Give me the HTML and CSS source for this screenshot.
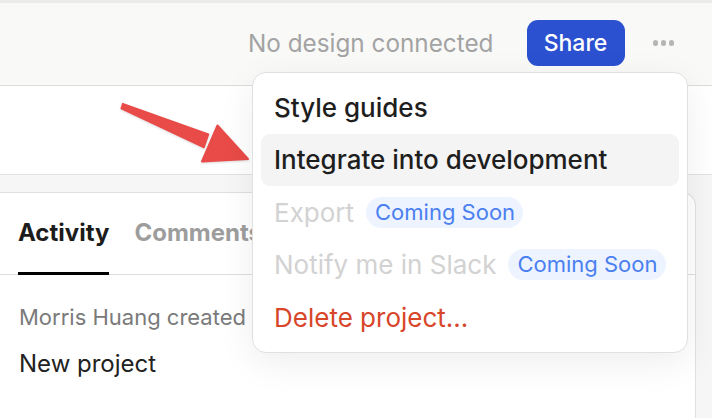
FILE: index.html
```html
<!DOCTYPE html>
<html>
<head>
<meta charset="utf-8">
<link rel="stylesheet" href="styles.css">
</head>
<body>
<div class="page">
  <div class="topline"></div>
  <header class="header">
    <span class="status">No design connected</span>
    <button class="share">Share</button>
    <span class="more"><i></i><i></i><i></i></span>
  </header>
  <section class="hero"></section>
  <div class="strip">
    <div class="card">
      <nav class="tabs">
        <span class="tab active">Activity</span>
        <span class="tab">Comments</span>
      </nav>
      <div class="feed">
        <div class="meta">Morris Huang created</div>
        <div class="title">New project</div>
      </div>
    </div>
  </div>

  <svg class="arrow" width="140" height="70" viewBox="115 100 140 70">
    <path d="M121.2 108.6 L122.8 103.6 L208.5 134.2 L204 147.5 Z" fill="#e84b48" stroke="#e84b48" stroke-width="1.5" stroke-linejoin="round"/>
    <path d="M217.5 125.5 L248 159 L202 161.5 Z" fill="#e84b48" stroke="#e84b48" stroke-width="2" stroke-linejoin="round"/>
  </svg>

  <div class="menu">
    <div class="item">Style guides</div>
    <div class="item hover">Integrate into development</div>
    <div class="item disabled">Export <span class="badge">Coming Soon</span></div>
    <div class="item disabled">Notify me in Slack <span class="badge">Coming Soon</span></div>
    <div class="item danger">Delete project...</div>
  </div>
</div>
</body>
</html>
```

FILE: styles.css
```css
html, body {
  margin: 0;
  padding: 0;
}
body {
  font-family: "Inter", "Noto Sans", sans-serif;
  background: #f6f6f6;
  overflow: hidden;
}
.page {
  position: relative;
  width: 712px;
  height: 418px;
  overflow: hidden;
}
.topline {
  height: 3px;
  background: #ebebeb;
}
.header {
  height: 83px;
  background: #f9f9f8;
  border-bottom: 1px solid #dcdcdc;
  box-sizing: border-box;
  display: flex;
  align-items: center;
  justify-content: flex-end;
  padding: 0 38px 2px 0;
}
.status {
  font-size: 24.3px;
  color: #a3a3a3;
  margin-right: 33px;
}
.share {
  font-family: inherit;
  border: 0;
  background: #2b50d0;
  color: #fff;
  font-size: 23px;
  font-weight: 500;
  width: 98px;
  height: 46px;
  border-radius: 11px;
  padding: 0;
  margin-right: 28px;
}
.more {
  display: flex;
  gap: 2.5px;
}
.more i {
  width: 5.5px;
  height: 5.5px;
  border-radius: 50%;
  background: #b6b6b6;
}
.hero {
  height: 88px;
  background: #fff;
  border-bottom: 1px solid #e2e2e2;
}
.strip {
  padding: 17px 16px 0 0;
  height: 243px;
}
.card {
  background: #fff;
  border-top: 1px solid #e0e0e0;
  border-right: 1px solid #e0e0e0;
  border-top-right-radius: 14px;
  height: 100%;
}
.tabs {
  display: flex;
  gap: 25px;
  padding-left: 18px;
  height: 82px;
  border-bottom: 1px solid #dedede;
  box-sizing: border-box;
}
.tab {
  font-size: 24px;
  font-weight: 700;
  color: #9d9d9d;
  padding-top: 25px;
  box-sizing: border-box;
}
.tab.active {
  color: #1c1c1c;
  border-bottom: 3px solid #000;
  margin-bottom: -1px;
}
.feed {
  padding: 27px 19px 0;
}
.meta {
  font-size: 22px;
  color: #7a7a7a;
  line-height: 30px;
}
.title {
  font-size: 24px;
  color: #222;
  line-height: 30px;
  margin-top: 17px;
}
.arrow {
  position: absolute;
  left: 115px;
  top: 100px;
  filter: drop-shadow(0 1px 1px rgba(0,0,0,0.15));
}
.menu {
  position: absolute;
  left: 252px;
  top: 72px;
  width: 436px;
  box-sizing: border-box;
  padding: 8px;
  background: #fff;
  border: 1px solid #e0e0e0;
  border-radius: 14px;
  box-shadow: 0 10px 36px rgba(0,0,0,0.07);
}
.item {
  height: 52.5px;
  display: flex;
  align-items: center;
  padding-left: 13px;
  font-size: 26px;
  font-weight: 500;
  color: #1e1e1e;
  border-radius: 9px;
}
.item.hover {
  background: #f4f4f4;
}
.item.disabled {
  color: #d2d2d2;
  font-weight: 400;
}
.item.danger {
  color: #d8462a;
  font-weight: 400;
}
.badge {
  margin-left: 12px;
  background: #edf3ff;
  color: #4a80f0;
  font-size: 22px;
  height: 31px;
  line-height: 31px;
  padding: 0 8px 0 9px;
  border-radius: 16px;
}
```
